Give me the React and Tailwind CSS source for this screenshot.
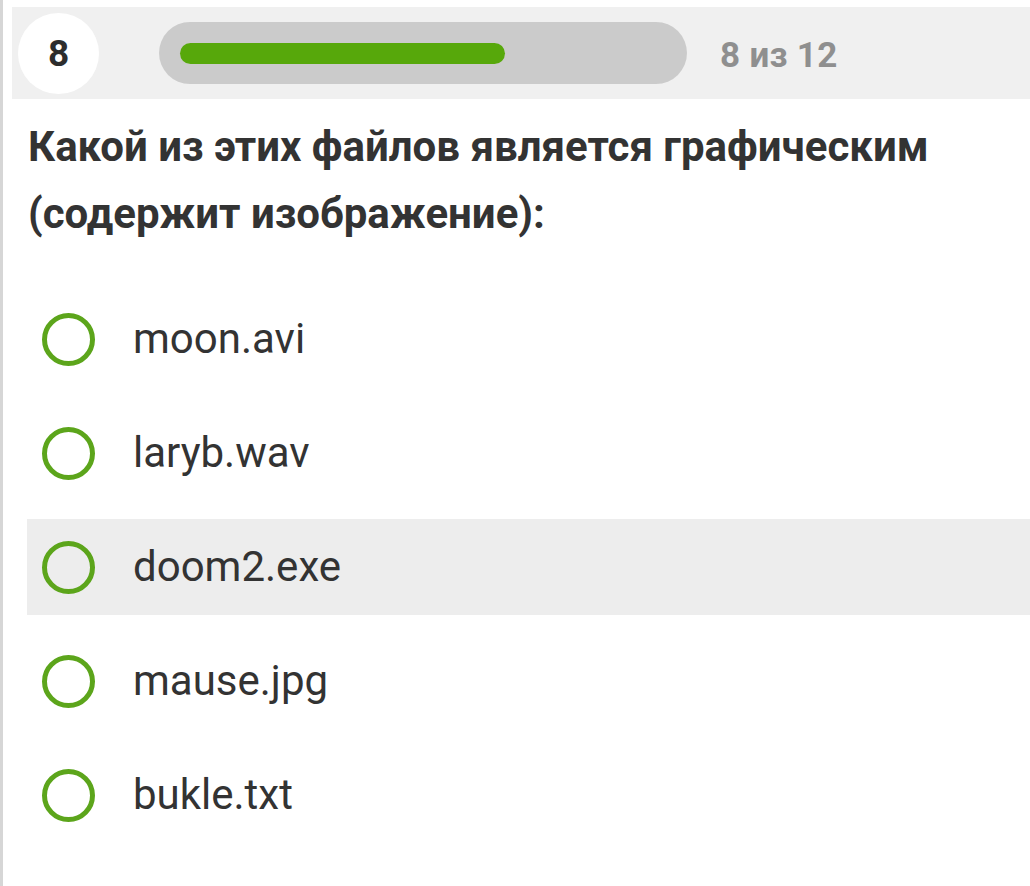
import React from "react";

const options = ["moon.avi", "laryb.wav", "doom2.exe", "mause.jpg", "bukle.txt"];

export default function App() {
  return (
    <div
      className="w-[1030px] h-[886px] bg-white border-l-[3px] border-[#d6d6d6] overflow-hidden"
      style={{ fontFamily: "Roboto, 'Noto Sans', sans-serif" }}
    >
      <div className="ml-[9px] mt-[7px] h-[92px] bg-[#f0f0f0] flex items-center pl-[6px]">
        <div className="w-[81px] h-[81px] rounded-full bg-white flex items-center justify-center text-[#2d2d2d] font-bold text-[37px] leading-none">
          8
        </div>
        <div className="ml-[60px] w-[528px] h-[62px] rounded-full bg-[#cbcbcb] flex items-center pl-[21px]">
          <div className="w-[325px] h-[21px] rounded-full bg-[#57a80b]" />
        </div>
        <div className="ml-[33px] mt-[4px] text-[35px] tracking-[0.3px] font-bold text-[#8f8f8f] leading-none">8 из 12</div>
      </div>

      <div className="pl-[25px] mt-[14px] text-[42px] leading-[67px] font-bold text-[#333333]">
        Какой из этих файлов является графическим
        <br />
        (содержит изображение):
      </div>

      <div className="mt-[44px] flex flex-col gap-[18px] pl-[24px]">
        {options.map((o, i) => (
          <div
            key={o}
            className={
              "h-[96px] flex items-center pl-[15px] " + (i === 2 ? "bg-[#ededed]" : "")
            }
          >
            <div className="w-[53px] h-[53px] rounded-full border-[5px] border-[#5ca51b] shrink-0" />
            <div className="ml-[38px] text-[42px] text-[#333333] leading-none">{o}</div>
          </div>
        ))}
      </div>
    </div>
  );
}
